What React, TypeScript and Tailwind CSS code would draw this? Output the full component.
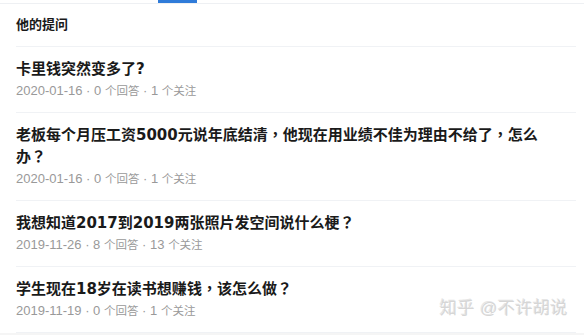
import React from 'react';

type Question = {
  title: string;
  date: string;
  answers: number;
  follows: number;
};

const questions: Question[] = [
  { title: '卡里钱突然变多了?', date: '2020-01-16', answers: 0, follows: 1 },
  {
    title: '老板每个月压工资5000元说年底结清，他现在用业绩不佳为理由不给了，怎么办？',
    date: '2020-01-16',
    answers: 0,
    follows: 1,
  },
  { title: '我想知道2017到2019两张照片发空间说什么梗？', date: '2019-11-26', answers: 8, follows: 13 },
  { title: '学生现在18岁在读书想赚钱，该怎么做？', date: '2019-11-19', answers: 0, follows: 1 },
];

const font = { fontFamily: '"Liberation Sans", "Noto Sans CJK SC", sans-serif' };
const titleFont = { fontFamily: '"DejaVu Sans", "Noto Sans CJK SC", sans-serif' };
const punctFont = { fontFamily: '"Noto Sans CJK TC", sans-serif' };

// full-width punctuation sits centred in its box in the screenshot
function Title({ text }: { text: string }) {
  const parts = text.split(/([，？])/);
  return (
    <div className="pr-[28px] text-[15px] leading-[22px] font-bold text-[#1a1a1a]" style={titleFont}>
      {parts.map((p, i) =>
        p === '，' || p === '？' ? (
          <span key={i} className="leading-none" style={punctFont}>
            {p}
          </span>
        ) : (
          <React.Fragment key={i}>{p}</React.Fragment>
        )
      )}
    </div>
  );
}

function Meta({ q }: { q: Question }) {
  return (
    <div className="mt-[1px] text-[13px] leading-[20px] text-[#999999]">
      {q.date} · {q.answers} <span className="text-[11.5px] leading-none">个回答</span> · {q.follows}{' '}
      <span className="text-[11.5px] leading-none">个关注</span>
    </div>
  );
}

export default function App() {
  return (
    <div className="relative w-[584px] h-[335px] overflow-hidden bg-white" style={font}>
      {/* tab indicator */}
      <div className="h-[3px]">
        <div className="ml-[158px] w-[39px] h-[3px] bg-[#2f7bd9]" />
      </div>
      <div className="h-px bg-[#eef0f3]" />

      <div className="h-[42px] flex items-center px-4 text-[13px] font-bold text-[#1a1a1a]">他的提问</div>

      <div className="ml-4 mr-2 border-t border-[#f0f2f5]">
        {questions.map((q) => (
          <div key={q.title} className="pt-[11px] pb-[11px] border-b border-[#f0f2f5]">
            <Title text={q.title} />
            <Meta q={q} />
          </div>
        ))}
      </div>
      <div className="h-[10px] bg-[#f5f5f5]" />

      {/* watermark */}
      <div
        className="absolute right-[16px] top-[298px] text-[17px] leading-[22px] text-[#d6d6d6] tracking-[0.5px]"
        style={{ textShadow: '1px 1px 0 #ffffff, -1px -1px 0 #e6e6e6' }}
      >
        知乎 @不许胡说
      </div>
    </div>
  );
}
